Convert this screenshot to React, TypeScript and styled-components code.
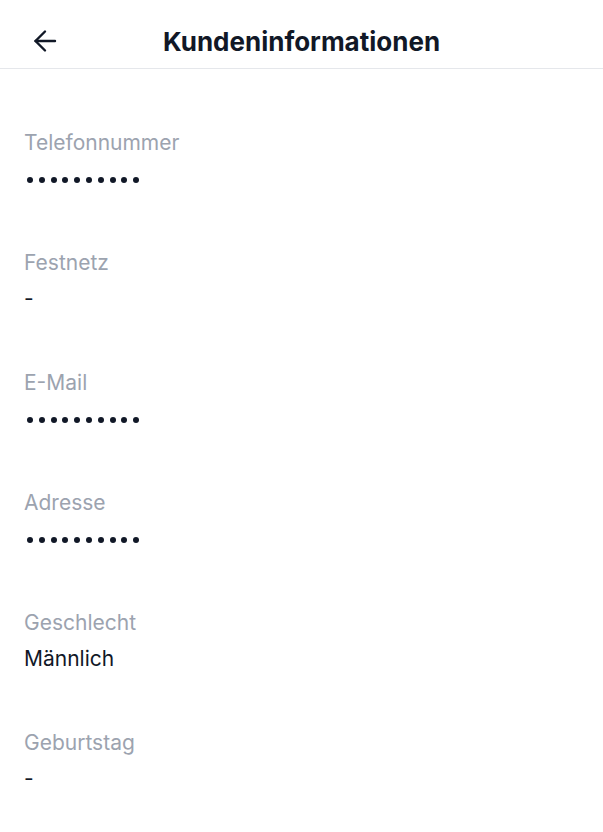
import React from 'react';
import styled, { createGlobalStyle } from 'styled-components';

const GlobalStyle = createGlobalStyle`
	html, body {
		margin: 0;
		padding: 0;
		background: #fff;
	}
	body {
		font-family: Inter, 'Noto Sans', sans-serif;
		-webkit-font-smoothing: antialiased;
	}
`;

const fields = [
	{ label: 'Telefonnummer', value: '', masked: true },
	{ label: 'Festnetz', value: '-' },
	{ label: 'E-Mail', value: '', masked: true },
	{ label: 'Adresse', value: '', masked: true },
	{ label: 'Geschlecht', value: 'Männlich' },
	{ label: 'Geburtstag', value: '-' }
];

const BackArrow = () => (
	<svg width='24' height='24' viewBox='0 0 24 24' fill='none' stroke='#111827' strokeWidth='2.4' strokeLinecap='round' strokeLinejoin='round'>
		<path d='M22 12H2.5' />
		<path d='M12 2.5L2.5 12L12 21.5' />
	</svg>
);

const App = () => {
	return (
		<Page>
			<GlobalStyle />
			<Header>
				<BackButton aria-label='Zurück'>
					<BackArrow />
				</BackButton>
				<Title>Kundeninformationen</Title>
				<span />
			</Header>
			<Content>
				{fields.map(f => (
					<Field key={f.label}>
						<Label>{f.label}</Label>
						{f.masked ? (
							<Dots>
								{Array.from({ length: 10 }).map((_, i) => (
									<Dot key={i} />
								))}
							</Dots>
						) : (
							<Value>{f.value}</Value>
						)}
					</Field>
				))}
			</Content>
		</Page>
	);
};

const Page = styled.main`
	width: 100%;
	min-height: 832px;
	background: #fff;
`;

const Header = styled.header`
	height: 69px;
	box-sizing: border-box;
	padding: 14px 33px 0;
	display: grid;
	grid-template-columns: 1fr auto 1fr;
	align-items: center;
	border-bottom: 1px solid #e5e7eb;
`;

const BackButton = styled.button`
	justify-self: start;
	padding: 0;
	border: none;
	background: none;
	display: flex;
	cursor: pointer;
`;

const Title = styled.h1`
	margin: 0;
	font-size: 26px;
	font-weight: 700;
	color: #111827;
	letter-spacing: 0;
`;

const Content = styled.section`
	padding: 62px 24px 0;
	display: flex;
	flex-direction: column;
`;

const Field = styled.div`
	display: flex;
	flex-direction: column;
	gap: 12px;
	margin-bottom: 60px;
`;

const Label = styled.span`
	font-size: 21px;
	line-height: 24px;
	color: #9ca3af;
`;

const Value = styled.span`
	font-size: 21px;
	line-height: 24px;
	color: #111827;
`;

const Dots = styled.div`
	height: 24px;
	display: flex;
	align-items: center;
	gap: 5.8px;
	padding-left: 3px;
	padding-top: 2px;
	box-sizing: border-box;
`;

const Dot = styled.span`
	width: 6px;
	height: 6px;
	border-radius: 50%;
	background: #111827;
`;

export default App;
